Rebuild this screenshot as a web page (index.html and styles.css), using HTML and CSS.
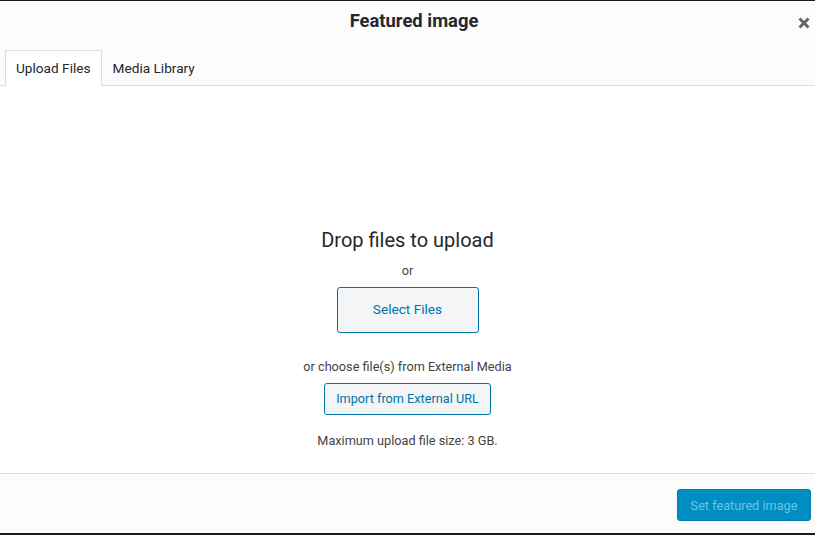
FILE: index.html
```html
<!DOCTYPE html>
<html>
<head>
    <link rel="stylesheet" href="styles.css">
</head>
<body>
    <div class="modal">
        <div class="modal-header">
            <h1>Featured image</h1>
            <button class="close-btn" aria-label="Close">
                <svg width="12" height="12" viewBox="0 0 12 12">
                    <path d="M1.5 1.5 L10.5 10.5 M10.5 1.5 L1.5 10.5" stroke="#666" stroke-width="3" fill="none"/>
                </svg>
            </button>
        </div>
        <div class="tabs">
            <div class="tab active">Upload Files</div>
            <div class="tab">Media Library</div>
        </div>
        <div class="uploader">
            <div class="drop-title">Drop files to upload</div>
            <div class="drop-or">or</div>
            <button class="select-btn">Select Files</button>
            <div class="ext-label">or choose file(s) from External Media</div>
            <button class="import-btn">Import from External URL</button>
            <div class="max-size">Maximum upload file size: 3 GB.</div>
        </div>
        <div class="modal-footer">
            <button class="primary-btn" disabled>Set featured image</button>
        </div>
    </div>
</body>
</html>
```

FILE: styles.css
```css
html, body {
    margin: 0;
    height: 100%;
}

body {
    background: #1a1a1a;
    font-family: Roboto, "Liberation Sans", sans-serif;
    color: #23282d;
    padding: 1px 0 2px;
    box-sizing: border-box;
}

.modal {
    height: 100%;
    background: #fff;
    display: flex;
    flex-direction: column;
}

.modal-header {
    position: relative;
    height: 41px;
    box-sizing: border-box;
    background: #fcfcfc;
    display: flex;
    align-items: flex-start;
    justify-content: center;
    padding: 1px 0 0 13px;
}

.modal-header h1 {
    margin: 0;
    font-size: 18.4px;
    font-weight: 700;
    line-height: 38px;
}

.close-btn {
    position: absolute;
    right: 4px;
    top: 15px;
    width: 14px;
    height: 14px;
    padding: 0;
    border: none;
    background: none;
    display: flex;
    align-items: center;
    justify-content: center;
}

.tabs {
    background: #fcfcfc;
    padding: 8px 5px 0;
    display: flex;
    border-bottom: 1px solid #ddd;
}

.tab {
    font-size: 13.65px;
    line-height: 34px;
    padding: 0 10px;
    border: 1px solid transparent;
    border-bottom: none;
    margin-bottom: -1px;
    color: #23282d;
}

.tab.active {
    background: #fff;
    border-color: #ddd;
    padding-bottom: 1px;
}

.uploader {
    flex: 1;
    display: flex;
    flex-direction: column;
    align-items: center;
    padding-top: 140px;
    text-align: center;
}

.drop-title {
    font-size: 20px;
    line-height: 28px;
}

.drop-or {
    font-size: 12.7px;
    line-height: 20px;
    margin-top: 7px;
    margin-bottom: -1px;
    color: #444;
}

.select-btn,
.import-btn {
    font-family: inherit;
    background: #f3f5f6;
    color: #0073aa;
    border: 1px solid #0073aa;
    border-radius: 3px;
    font-size: 13.65px;
    padding: 0 0 2px;
}

.select-btn {
    margin-top: 7px;
    width: 142px;
    height: 46px;
}

.ext-label {
    font-size: 12.7px;
    line-height: 20px;
    margin-top: 24px;
    margin-bottom: -1px;
    color: #444;
}

.import-btn {
    margin-top: 7px;
    width: 167px;
    height: 32px;
    font-size: 12.7px;
}

.max-size {
    font-size: 12.7px;
    line-height: 20px;
    margin-top: 16px;
    color: #444;
}

.modal-footer {
    background: #fcfcfc;
    border-top: 1px solid #ddd;
    display: flex;
    justify-content: flex-end;
    align-items: flex-start;
    padding: 15px 4px 0;
    box-sizing: border-box;
    height: 60px;
}

.primary-btn {
    font-family: inherit;
    width: 134px;
    height: 32px;
    background: #008ec2;
    border: 1px solid #007cb2;
    border-radius: 3px;
    color: #66c6e4;
    font-size: 12.7px;
    padding: 0;
}
```
